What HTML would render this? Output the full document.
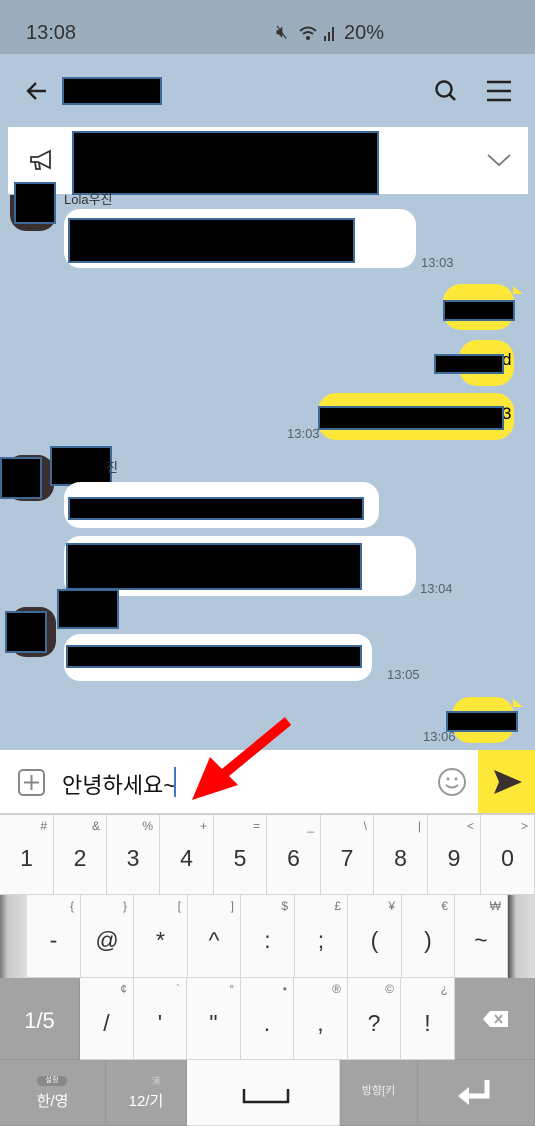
<!DOCTYPE html>
<html><head><meta charset="utf-8"><style>
*{margin:0;padding:0;box-sizing:border-box}
body{width:535px;height:1126px;overflow:hidden;background:#b2c7da;font-family:"Liberation Sans","Noto Sans CJK KR",sans-serif;position:relative}
.a{position:absolute}
.blk{position:absolute;background:#000;border:2px solid #3d6a96}
.w{position:absolute;background:#fff;border-radius:16px}
.y{position:absolute;background:#fde83a;border-radius:18px}
.t{position:absolute;font-size:13px;color:#556270}
.k{position:absolute;background:#fafafa;border-right:1px solid #d6d6d6;border-bottom:1px solid #d6d6d6;text-align:center;color:#333}
.k .m{position:absolute;left:0;right:0;font-size:23px}
.k .s{position:absolute;right:6px;top:4px;font-size:12px;color:#777}
.g{position:absolute;background:#a3a3a3;border-right:1px solid #969696;border-bottom:1px solid #969696;color:#fff;text-align:center}
.tail{position:absolute;width:0;height:0;border-left:10px solid #fde83a;border-top:8px solid transparent}
</style></head><body>
<div class="a" style="left:0;top:0;width:535px;height:54px;background:#9cadbe"></div>
<div class="a" style="left:26px;top:22px;font-size:20px;color:#333">13:08</div>
<div class="a" style="left:276px;top:22px;font-size:19px;color:#333">🔇︎</div>
<div class="a" style="left:344px;top:22px;font-size:20px;color:#333">20%</div>
<svg class="a" style="left:298px;top:24px" width="44" height="20"><path d="M2 7 Q10 0 18 7 M5 10 Q10 6 15 10" stroke="#333" stroke-width="2" fill="none"/><circle cx="10" cy="14" r="2" fill="#333"/><rect x="26" y="12" width="2" height="5" fill="#333"/><rect x="30" y="8" width="2" height="9" fill="#333"/><rect x="34" y="3" width="2" height="14" fill="#333"/></svg>
<svg class="a" style="left:24px;top:78px" width="26" height="26"><path d="M22 13H4M12 5L4 13L12 21" stroke="#222" stroke-width="2.4" fill="none"/></svg>
<div class="blk" style="left:62px;top:77px;width:100px;height:28px"></div>
<svg class="a" style="left:432px;top:78px" width="28" height="26"><circle cx="12" cy="11" r="7.5" stroke="#222" stroke-width="2.4" fill="none"/><path d="M17 16L23 22" stroke="#222" stroke-width="2.6"/></svg>
<svg class="a" style="left:486px;top:80px" width="26" height="22"><path d="M1 2H25M1 11H25M1 20H25" stroke="#222" stroke-width="2.4"/></svg>
<div class="a" style="left:8px;top:127px;width:520px;height:67px;background:#fff"></div>
<svg class="a" style="left:28px;top:148px" width="28" height="26"><path d="M3 9H10L22 3V20L10 14H3Z M7 14L8 21H12L11 15" stroke="#333" stroke-width="1.8" fill="none"/></svg>
<svg class="a" style="left:486px;top:152px" width="26" height="16"><path d="M2 3L13 13L24 3" stroke="#777" stroke-width="1.8" fill="none"/></svg>
<div class="blk" style="left:72px;top:131px;width:307px;height:64px"></div>
<div class="a" style="left:10px;top:195px;width:46px;height:36px;background:#3a3030;border-radius:0 0 16px 16px"></div>
<div class="blk" style="left:14px;top:182px;width:42px;height:42px"></div>
<div class="a" style="left:64px;top:189px;font-size:13px;color:#333">Lola우진</div>
<div class="w" style="left:64px;top:209px;width:352px;height:59px"></div>
<div class="blk" style="left:68px;top:218px;width:287px;height:45px"></div>
<div class="t" style="left:421px;top:255px">13:03</div>
<div class="y" style="left:443px;top:284px;width:71px;height:46px"></div>
<div class="tail" style="left:513px;top:286px"></div>
<div class="blk" style="left:443px;top:300px;width:72px;height:21px"></div>
<div class="y" style="left:459px;top:340px;width:55px;height:46px"></div>
<div class="a" style="left:502px;top:350px;font-size:17px">d</div>
<div class="blk" style="left:434px;top:354px;width:70px;height:20px"></div>
<div class="y" style="left:318px;top:393px;width:196px;height:47px"></div>
<div class="a" style="left:502px;top:404px;font-size:17px">3</div>
<div class="blk" style="left:318px;top:406px;width:186px;height:24px"></div>
<div class="t" style="left:287px;top:426px">13:03</div>
<div class="a" style="left:6px;top:455px;width:48px;height:46px;background:#3a3030;border-radius:16px"></div>
<div class="blk" style="left:0;top:457px;width:42px;height:42px"></div>
<div class="blk" style="left:50px;top:446px;width:62px;height:40px"></div>
<div class="a" style="left:106px;top:457px;font-size:13px;color:#333">진</div>
<div class="w" style="left:64px;top:482px;width:315px;height:46px"></div>
<div class="blk" style="left:68px;top:497px;width:296px;height:23px"></div>
<div class="w" style="left:64px;top:536px;width:352px;height:60px"></div>
<div class="blk" style="left:66px;top:543px;width:296px;height:47px"></div>
<div class="t" style="left:420px;top:581px">13:04</div>
<div class="a" style="left:10px;top:607px;width:46px;height:50px;background:#3a3030;border-radius:16px"></div>
<div class="blk" style="left:5px;top:611px;width:42px;height:42px"></div>
<div class="blk" style="left:57px;top:589px;width:62px;height:40px"></div>
<div class="w" style="left:64px;top:634px;width:308px;height:47px"></div>
<div class="blk" style="left:66px;top:645px;width:296px;height:23px"></div>
<div class="t" style="left:387px;top:667px">13:05</div>
<div class="y" style="left:452px;top:697px;width:62px;height:46px"></div>
<div class="tail" style="left:513px;top:699px"></div>
<div class="blk" style="left:446px;top:711px;width:72px;height:21px"></div>
<div class="t" style="left:423px;top:729px">13:06</div>
<div class="a" style="left:0;top:750px;width:535px;height:63px;background:#fff"></div>
<svg class="a" style="left:16px;top:767px" width="32" height="32"><rect x="3" y="3" width="25" height="25" rx="4" stroke="#888" stroke-width="2" fill="none"/><path d="M15.5 8V23M8 15.5H23" stroke="#888" stroke-width="2"/></svg>
<div class="a" style="left:62px;top:768px;font-size:22px;color:#111">안녕하세요~</div>
<div class="a" style="left:174px;top:767px;width:2px;height:30px;background:#3a7ac0"></div>
<svg class="a" style="left:435px;top:765px" width="34" height="34"><circle cx="17" cy="17" r="13" stroke="#999" stroke-width="2" fill="none"/><circle cx="13" cy="14" r="1.5" fill="#999"/><circle cx="21" cy="14" r="1.5" fill="#999"/><path d="M11 20Q17 25 23 20" stroke="#999" stroke-width="2" fill="none"/></svg>
<div class="a" style="left:478px;top:750px;width:57px;height:63px;background:#fde83a"></div>
<svg class="a" style="left:492px;top:768px" width="32" height="28"><path d="M2 2L30 14L2 26L7 14Z" fill="#3a3030"/></svg>
<svg class="a" style="left:190px;top:715px" width="110" height="90"><path d="M98 6L30 62" stroke="#f00" stroke-width="10"/><path d="M2 85L20 42L48 70Z" fill="#f00"/></svg>
<div class="a" style="left:0;top:813px;width:535px;height:313px;background:#d0d0d0"></div>
<div class="k" style="left:0;top:815px;width:54px;height:80px"><span class="s">#</span><span class="m" style="top:30px">1</span></div>
<div class="k" style="left:54px;top:815px;width:53px;height:80px"><span class="s">&amp;</span><span class="m" style="top:30px">2</span></div>
<div class="k" style="left:107px;top:815px;width:53px;height:80px"><span class="s">%</span><span class="m" style="top:30px">3</span></div>
<div class="k" style="left:160px;top:815px;width:54px;height:80px"><span class="s">+</span><span class="m" style="top:30px">4</span></div>
<div class="k" style="left:214px;top:815px;width:53px;height:80px"><span class="s">=</span><span class="m" style="top:30px">5</span></div>
<div class="k" style="left:267px;top:815px;width:54px;height:80px"><span class="s">_</span><span class="m" style="top:30px">6</span></div>
<div class="k" style="left:321px;top:815px;width:53px;height:80px"><span class="s">\</span><span class="m" style="top:30px">7</span></div>
<div class="k" style="left:374px;top:815px;width:54px;height:80px"><span class="s">|</span><span class="m" style="top:30px">8</span></div>
<div class="k" style="left:428px;top:815px;width:53px;height:80px"><span class="s">&lt;</span><span class="m" style="top:30px">9</span></div>
<div class="k" style="left:481px;top:815px;width:54px;height:80px"><span class="s">&gt;</span><span class="m" style="top:30px">0</span></div>
<div class="a" style="left:0;top:895px;width:27px;height:83px;background:linear-gradient(90deg,#777,#ccc 30%,#ddd)"></div>
<div class="a" style="left:508px;top:895px;width:27px;height:83px;background:linear-gradient(90deg,#555,#ccc 30%,#ddd)"></div>
<div class="k" style="left:27px;top:895px;width:54px;height:83px"><span class="s">{</span><span class="m" style="top:32px">-</span></div>
<div class="k" style="left:81px;top:895px;width:53px;height:83px"><span class="s">}</span><span class="m" style="top:32px">@</span></div>
<div class="k" style="left:134px;top:895px;width:54px;height:83px"><span class="s">[</span><span class="m" style="top:32px">*</span></div>
<div class="k" style="left:188px;top:895px;width:53px;height:83px"><span class="s">]</span><span class="m" style="top:32px">^</span></div>
<div class="k" style="left:241px;top:895px;width:54px;height:83px"><span class="s">$</span><span class="m" style="top:32px">:</span></div>
<div class="k" style="left:295px;top:895px;width:53px;height:83px"><span class="s">£</span><span class="m" style="top:32px">;</span></div>
<div class="k" style="left:348px;top:895px;width:54px;height:83px"><span class="s">¥</span><span class="m" style="top:32px">(</span></div>
<div class="k" style="left:402px;top:895px;width:53px;height:83px"><span class="s">€</span><span class="m" style="top:32px">)</span></div>
<div class="k" style="left:455px;top:895px;width:53px;height:83px"><span class="s">₩</span><span class="m" style="top:32px">~</span></div>
<div class="g" style="left:0;top:978px;width:80px;height:82px"><span class="a" style="left:0;right:0;top:30px;font-size:22px">1/5</span></div>
<div class="k" style="left:80px;top:978px;width:54px;height:82px"><span class="s">¢</span><span class="m" style="top:32px">/</span></div>
<div class="k" style="left:134px;top:978px;width:53px;height:82px"><span class="s">`</span><span class="m" style="top:32px">'</span></div>
<div class="k" style="left:187px;top:978px;width:54px;height:82px"><span class="s">°</span><span class="m" style="top:32px">"</span></div>
<div class="k" style="left:241px;top:978px;width:53px;height:82px"><span class="s">•</span><span class="m" style="top:32px">.</span></div>
<div class="k" style="left:294px;top:978px;width:54px;height:82px"><span class="s">®</span><span class="m" style="top:32px">,</span></div>
<div class="k" style="left:348px;top:978px;width:53px;height:82px"><span class="s">©</span><span class="m" style="top:32px">?</span></div>
<div class="k" style="left:401px;top:978px;width:54px;height:82px"><span class="s">¿</span><span class="m" style="top:32px">!</span></div>
<div class="g" style="left:455px;top:978px;width:80px;height:82px"><svg class="a" style="left:28px;top:32px" width="26" height="18"><path d="M7 1H25V17H7L0 9Z" fill="#fff"/><path d="M12 5L19 13M19 5L12 13" stroke="#a3a3a3" stroke-width="2"/></svg></div>
<div class="g" style="left:0;top:1060px;width:106px;height:66px"><span class="a" style="left:37px;top:16px;width:30px;height:10px;background:#888;border-radius:5px;font-size:7px;line-height:10px">설정</span><span class="a" style="left:0;right:0;top:30px;font-size:15px">한/영</span></div>
<div class="g" style="left:106px;top:1060px;width:81px;height:66px"><span class="a" style="left:0;right:0;top:14px;font-size:9px;color:#ccc;padding-left:20px">漢</span><span class="a" style="left:0;right:0;top:30px;font-size:15px">12/기</span></div>
<div class="k" style="left:187px;top:1060px;width:153px;height:66px;background:#fafafa"><svg class="a" style="left:55px;top:28px" width="48" height="16"><path d="M2 1V14H46V1" stroke="#222" stroke-width="2.5" fill="none"/></svg></div>
<div class="g" style="left:340px;top:1060px;width:78px;height:66px"><span class="a" style="left:0;right:0;top:22px;font-size:11px;color:#eee">방향[키</span></div>
<div class="g" style="left:418px;top:1060px;width:117px;height:66px"><svg class="a" style="left:39px;top:18px" width="36" height="30"><path d="M30 2V18H10" stroke="#fff" stroke-width="5" fill="none"/><path d="M1 18L12 9V27Z" fill="#fff"/></svg></div>
</body></html>
